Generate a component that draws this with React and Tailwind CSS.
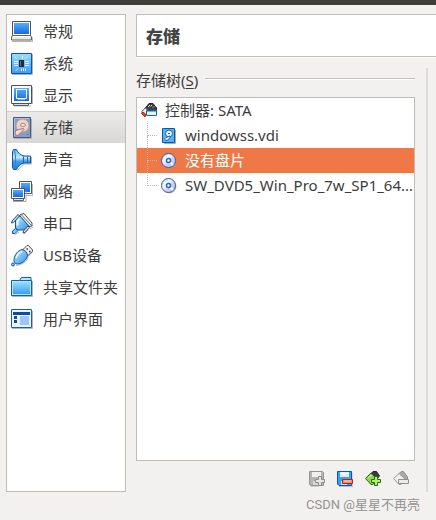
import { useState } from "react";

const Defs = () => (
  <svg className="absolute" width="0" height="0" aria-hidden="true">
    <defs>
      <linearGradient id="screen" x1="0" y1="0" x2="0" y2="1">
        <stop offset="0" stopColor="#4fb0ff" />
        <stop offset="1" stopColor="#1a66e0" />
      </linearGradient>
      <linearGradient id="sky" x1="0" y1="0" x2="0" y2="1">
        <stop offset="0" stopColor="#9adcff" />
        <stop offset="1" stopColor="#3b9cf2" />
      </linearGradient>
      <linearGradient id="cone" x1="0" y1="0" x2="0" y2="1">
        <stop offset="0" stopColor="#5db4f5" />
        <stop offset="0.4" stopColor="#c4ebff" />
        <stop offset="0.6" stopColor="#3f9bee" />
        <stop offset="1" stopColor="#2b7fd8" />
      </linearGradient>
      <linearGradient id="plug" x1="0" y1="0" x2="1" y2="1">
        <stop offset="0" stopColor="#c4ecff" />
        <stop offset="1" stopColor="#2f8fe6" />
      </linearGradient>
      <linearGradient id="disc" x1="0" y1="0" x2="1" y2="1">
        <stop offset="0" stopColor="#8cc8f8" />
        <stop offset="0.35" stopColor="#f4fbff" />
        <stop offset="0.6" stopColor="#d9c9f5" />
        <stop offset="1" stopColor="#7fdcdc" />
      </linearGradient>
    </defs>
  </svg>
);

const Icon22 = ({ children }) => (
  <svg className="size-[22px] shrink-0" viewBox="0 0 22 22" fill="none" aria-hidden="true">
    {children}
  </svg>
);

const Icon16 = ({ children }) => (
  <svg className="size-4 shrink-0" viewBox="0 0 16 16" fill="none" aria-hidden="true">
    {children}
  </svg>
);

const GeneralIcon = () => (
  <Icon22>
    <path d="M1 20.500h20.500v-4" stroke="#b5b5b5" />
    <path d="M1.500.500h18v14h-18z" fill="#fff" stroke="#505050" />
    <path d="M3 2h15v11H3z" fill="url(#screen)" />
    <path d="M1.500 14.500h18l1 1.500v3H.500v-3z" fill="#e8e8e8" stroke="#606060" />
    <path d="M2 15.500h17" stroke="#fff" />
  </Icon22>
);

const SystemIcon = () => (
  <Icon22>
    <path d="M21.500 1v20.500H1" stroke="#b0b0b0" />
    <path d="M.500.500h20v20H.500z" fill="url(#sky)" stroke="#0b57a8" />
    <path d="M8 7h5v7H8z" fill="#262b33" />
    <path d="M9 8h1v5H9z" fill="#68717d" />
    <path
      d="M3 8.500h4M3 10.500h4M3 12.500h4M14 8.500h4M14 10.500h4M14 12.500h4M11.500 3v3M14 5.500l2-2M4 4l2 2M4.500 18l2.500-2.500M10.500 15.500V18M12.500 15.500V18M14.500 15.500V18"
      stroke="#e8f5ff"
    />
  </Icon22>
);

const DisplayIcon = () => (
  <Icon22>
    <path d="M3 21h17M21.500 2v17" stroke="#b5b5b5" />
    <path d="M2.500 18.500h15v2h-15z" fill="#ddd" stroke="#606060" />
    <path d="M.500.500h20v18H.500z" fill="#fff" stroke="#505050" />
    <path d="M3 3h15v13H3z" fill="url(#screen)" />
    <path d="M5.500 4.500h10v9h-10z" stroke="#fff" />
    <path d="M7 14h7" stroke="#fff" />
  </Icon22>
);

const StorageIcon = () => (
  <Icon22>
    <path d="M3 21.500h17.500V2" stroke="#b3aeb0" />
    <path d="M2.500.500h17v20h-17z" fill="#8b9cbe" stroke="#3f5a8c" />
    <path d="M3.500 19V1.500H18" stroke="#b3bfd6" />
    <circle cx="11.500" cy="8.500" r="6.500" fill="#ecd3ca" stroke="#c49f9a" />
    <ellipse cx="12" cy="8" rx="2.500" ry="1.500" fill="#fbeee8" stroke="#a98488" />
    <path
      d="M12.500 11.500L6 13c-2 1-2.500 3-1.500 4.500s3 1 4-.500l4.500-4.500z"
      fill="#f0dcd4"
      stroke="#97757f"
    />
    <path d="M16 17.500h1.500" stroke="#5d6c96" />
  </Icon22>
);

const SoundIcon = () => (
  <Icon22>
    <path d="M6 21.500l7-6.500h7.500V8" stroke="#b0b0b0" />
    <path
      d="M1.500 2.500l1-2h3c1.500 3.500 4 5.500 7.500 6.500h6.500v7H13c-3.500 1-6 3-7.500 6.500h-3l-1-2z"
      fill="url(#cone)"
      stroke="#0b57a8"
    />
    <path d="M3.500 1.500c1.500 5 1.500 13 0 18" stroke="#2a80d2" />
    <path d="M12.500 7.500v6.500M16.500 7.500v6.500" stroke="#1567bd" />
  </Icon22>
);

const NetworkIcon = () => (
  <Icon22>
    <path d="M15 14.500h6.500V3" stroke="#b8b8b8" />
    <path d="M8.500.500h12v12h-12z" fill="#fff" stroke="#555" />
    <path d="M10 2h9v9h-9z" fill="url(#screen)" />
    <path d="M2 20.500h13V10" stroke="#aaa" />
    <path d="M2.500 17.500h10v2h-10z" fill="#e0e0e0" stroke="#606060" />
    <path d="M.500 7.500h13v10H.500z" fill="#fff" stroke="#555" />
    <path d="M2 9h10v7H2z" fill="url(#screen)" />
  </Icon22>
);

const SerialIcon = () => (
  <Icon22>
    <path d="M4 21.500l4-2.500M13 21l4-4M19 16l3-2" stroke="#b0b0b0" />
    <path d="M9.500 1.500L13 .500l8 9.500v3l-3 .500L8.500 3z" fill="#f2f2f2" stroke="#4a4a4a" />
    <path d="M10.500 2l9.500 10" stroke="#6c6c6c" />
    <path d="M6 4.500l3-1.500 9 10-1.500 3-4 1H7l-2.500-2V8z" fill="url(#plug)" stroke="#0b57a8" />
    <path d="M6.500 12.500V8L8.500 6" stroke="#e9f8ff" strokeWidth="2" />
    <path d="M7 1.500L8.500 3l-6 6.500-2 .500.500-2z" fill="#b9e2ff" stroke="#28507f" />
    <path d="M18.500 14.500l-4.500 5-2 .500.500-2 4.500-5z" fill="#e4e4e4" stroke="#444" />
    <path d="M4.500 15.500l-3 2.500v2.500h2.500L7 17.500z" fill="#7fc8ff" stroke="#0b57a8" />
  </Icon22>
);

const UsbIcon = () => (
  <Icon22>
    <path d="M5 20.500c7-1 12-5 12-9l5-5" stroke="#b5b5b5" />
    <path d="M11.500 5L16 .500h1.500L21.500 5v1.500l-4.500 4z" fill="#f2f2f2" stroke="#505050" />
    <path d="M15.500 4h1.500M18 6.500h1.500" stroke="#333" strokeWidth="1.500" />
    <path
      d="M11 4.500c3 .500 5.500 3 5.500 6-1 5-5 8-10 8.500-2.500 0-4-2-3.500-4.500C3.500 9.500 7 5.500 11 4.500z"
      fill="url(#plug)"
      stroke="#0b57a8"
    />
    <path d="M5 13c1-3 3.500-5.500 6-6.500" stroke="#e8f8ff" strokeWidth="1.500" />
    <circle cx="2" cy="19.500" r="1.500" fill="#7fc8ff" stroke="#0b57a8" />
  </Icon22>
);

const FolderIcon = () => (
  <Icon22>
    <path d="M1 19.500h20.500V4" stroke="#b5b5b5" />
    <path d="M.500 3.500h8l2-3h9.500v3h.500v15H.500z" fill="#b8e6ff" stroke="#0b62b4" />
    <path d="M2 5h17v12H2z" fill="url(#sky)" />
    <path d="M9 3.500h11" stroke="#0b62b4" />
  </Icon22>
);

const InterfaceIcon = () => (
  <Icon22>
    <path d="M1 19.500h20.500V2" stroke="#b5b5b5" />
    <path d="M.500.500h20v18H.500z" fill="#eef6ff" stroke="#0b62c4" />
    <path d="M2 3h17v3H2z" fill="#0b4aa6" />
    <path d="M3 7h3v3H3zM3 11h3v3H3z" fill="#0b4aa6" />
    <path d="M9 7h9v9H9z" fill="#9cc6ff" />
  </Icon22>
);

const ControllerIcon = () => (
  <Icon16>
    <path d="M3.500 6L8 .500h4L15.500 5v3H5z" fill="#3f3f3f" stroke="#222" />
    <path d="M7 4l2-2M9.500 3.500L11 2M12 4.500l1-1" stroke="#e4e4e4" />
    <path d="M.500 9L4 5l2 1v5L4 13z" fill="#f2f2f2" stroke="#666" />
    <path d="M.500 10.500L2 9l2.500 2-.500 3z" fill="#e8442c" stroke="#b5230f" />
    <path d="M5.500 7.500h10v5h-10z" fill="#e6f4ff" stroke="#1565b8" />
    <path d="M6 8h9.500" stroke="#1565b8" />
  </Icon16>
);

const DiskIcon = () => (
  <Icon16>
    <path d="M3 15.500h11.500V2" stroke="#aaa" />
    <path d="M1.500.500h12v14h-12z" fill="#58b0f5" stroke="#0b57a8" />
    <circle cx="8" cy="5.500" r="3.500" fill="#e5f5ff" stroke="#1768ba" />
    <path d="M7 5.500h2" stroke="#1768ba" />
    <path d="M9 8L5 9.500c-1.500 1-1.500 3 0 3s2.500-1 4-3z" fill="#e5f5ff" stroke="#1768ba" />
  </Icon16>
);

const DiscIcon = () => (
  <Icon16>
    <circle cx="8.500" cy="8.500" r="7" fill="#9a9a9a" fillOpacity="0.600" />
    <circle cx="7.500" cy="7.500" r="7" fill="url(#disc)" stroke="#3d5a94" />
    <path d="M3 4l2.500 2M9.500 9.500L12 12" stroke="#fff" strokeWidth="2" />
    <circle cx="7.500" cy="7.500" r="2" fill="#fff" stroke="#2467bd" strokeWidth="1.500" />
  </Icon16>
);

const AddControllerIcon = () => (
  <Icon16>
    <path d="M2 15.500h8" stroke="#ccc" />
    <path d="M.500.500h13l1 1v13H2l-1.500-1z" fill="#b5b5b5" stroke="#949494" />
    <path d="M3 1h9v5H3z" fill="#f0f0f0" />
    <path d="M4 10h6v4H4z" fill="#d8d8d8" />
    <path d="M9.500 5.500h3v3h3v3h-3v3h-3v-3h-3v-3h3z" fill="#e6e6e6" stroke="#8c8c8c" />
  </Icon16>
);

const RemoveControllerIcon = () => (
  <Icon16>
    <path d="M2 15.500h14V2" stroke="#bbb" />
    <path d="M.500.500h14v14H2l-1.500-1.500z" fill="#3c9df0" stroke="#0b57a8" />
    <path d="M3 1h9v5H3z" fill="#d6efff" />
    <path d="M3 2.500h9" stroke="#fff" />
    <path d="M4 10h6v4H4z" fill="#bfe3ff" />
    <path d="M5.500 8.500h10v4h-10z" fill="#f08a68" stroke="#b52412" />
    <path d="M7 10h7" stroke="#ffd6c4" />
  </Icon16>
);

const AddAttachmentIcon = () => (
  <Icon16>
    <path d="M5.500 3L8 .500h3.500l3 4.500L11 9z" fill="#3b3b3b" stroke="#222" />
    <path d="M.500 7.500L6 2l6 6-4 5.500H6z" fill="#8bd44c" stroke="#2c6b10" />
    <path d="M3 7.500L6.500 4" stroke="#e0ffc4" />
    <path d="M9.500 5.500h3v3h3v3h-3v3h-3v-3h-3v-3h3z" fill="#b4f070" stroke="#2c6b10" />
  </Icon16>
);

const RemoveAttachmentIcon = () => (
  <Icon16>
    <path d="M6 2.500L8.500.500h2l4 5.500v2.500H11z" fill="#a8a8a8" stroke="#8f8f8f" />
    <path d="M.500 7.500L6 2.500l6 5.500-4 5.500H6z" fill="#efefef" stroke="#999" />
    <path d="M5.500 8.500h10v4h-10z" fill="#ececec" stroke="#8f8f8f" />
  </Icon16>
);

const categories = [
  { label: "常规", icon: GeneralIcon },
  { label: "系统", icon: SystemIcon },
  { label: "显示", icon: DisplayIcon },
  { label: "存储", icon: StorageIcon },
  { label: "声音", icon: SoundIcon },
  { label: "网络", icon: NetworkIcon },
  { label: "串口", icon: SerialIcon },
  { label: "USB设备", icon: UsbIcon },
  { label: "共享文件夹", icon: FolderIcon },
  { label: "用户界面", icon: InterfaceIcon },
];

const attachments = [
  { label: "windowss.vdi", icon: DiskIcon },
  { label: "没有盘片", icon: DiscIcon },
  { label: "SW_DVD5_Win_Pro_7w_SP1_64...", icon: DiscIcon },
];

const tools = [
  { label: "添加控制器", icon: AddControllerIcon, disabled: true },
  { label: "删除控制器", icon: RemoveControllerIcon },
  { label: "添加虚拟介质", icon: AddAttachmentIcon },
  { label: "删除虚拟介质", icon: RemoveAttachmentIcon, disabled: true },
];

const App = () => {
  const [category, setCategory] = useState("存储");
  const [selected, setSelected] = useState(1);

  return (
    <div className="flex min-h-screen flex-col bg-[#f2f1ef] font-['Noto_Sans','Noto_Sans_CJK_SC',sans-serif] text-[15px] text-[#3c3c3c]">
      <Defs />
      <div className="h-[5px] bg-[#3e3d39]" />

      <div className="flex flex-1 gap-[10px] pt-[9px] pl-[6px]">
        <nav className="w-[120px] shrink-0 border border-[#bfbcb8] bg-white">
          {categories.map(({ label, icon: Icon }) => (
            <button
              key={label}
              onClick={() => setCategory(label)}
              className={`flex h-8 w-full items-center gap-[10px] border-t pl-1 text-left whitespace-nowrap ${
                category === label
                  ? "border-[#d0cecb] bg-linear-to-b from-[#ebeae9] to-[#dad8d5]"
                  : "border-transparent"
              }`}
            >
              <Icon />
              <span>{label}</span>
            </button>
          ))}
        </nav>

        <main className="flex min-w-0 flex-1 flex-col">
          <h1 className="border border-r-0 border-[#bfbfbf] bg-white pl-[9px] font-['Noto_Sans_CJK_SC',sans-serif] text-[17px] leading-[41px] font-black text-[#444] shadow-[0_1px_0_white]">
            {category}
          </h1>

          <div className="mt-[11px] flex flex-1 gap-[11px] pr-2">
            <section className="flex min-w-0 flex-1 flex-col">
              <div className="mb-1 flex h-[25px] items-center gap-[7px]">
                <h2>
                  存储树(<u className="underline-offset-2">S</u>)
                </h2>
                <div className="mb-1 h-[2px] flex-1 border-t border-[#c4c2c0] bg-white" />
              </div>

              <div className="flex-1 border border-[#bfbcb8] bg-white" role="tree">
                <div className="flex h-[25px] items-center gap-2 pl-1" role="treeitem">
                  <ControllerIcon />
                  控制器: SATA
                </div>
                {attachments.map(({ label, icon: Icon }, i) => (
                  <button
                    key={label}
                    role="treeitem"
                    aria-selected={selected === i}
                    onClick={() => setSelected(i)}
                    className={`flex h-[25px] w-full items-center pl-[10px] text-left ${
                      selected === i ? "bg-[#f07746] text-white" : ""
                    }`}
                  >
                    <span className="flex h-full w-[14px] shrink-0 flex-col pr-1">
                      <span className="h-[13px] border-b border-l border-dotted border-[#b8b8b8]" />
                      {i < attachments.length - 1 && (
                        <span className="flex-1 border-l border-dotted border-[#b8b8b8]" />
                      )}
                    </span>
                    <Icon />
                    <span className="ml-2 min-w-0 flex-1 truncate">{label}</span>
                  </button>
                ))}
              </div>

              <div className="flex h-[31px] items-center justify-end gap-3 pt-1 pr-[6px]">
                {tools.map(({ label, icon: Icon, disabled }) => (
                  <button key={label} aria-label={label} disabled={disabled}>
                    <Icon />
                  </button>
                ))}
              </div>
            </section>
            <div className="w-[2px] bg-[#dddcda]" />
          </div>
        </main>
      </div>

      <footer className="h-7 pr-4 text-right font-['Roboto','Noto_Sans_CJK_SC',sans-serif] text-[13px] leading-[25px] text-[#929292]">
        CSDN @星星不再亮
      </footer>
    </div>
  );
};

export default App;
